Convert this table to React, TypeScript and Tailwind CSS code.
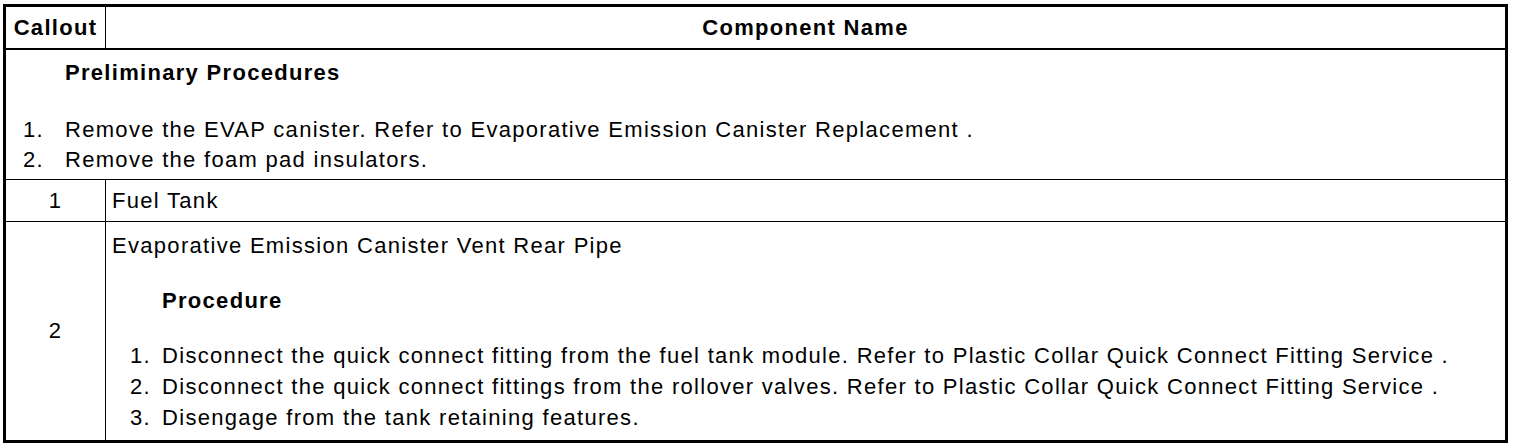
export default function App() {
  const font = { fontFamily: '"Liberation Sans", Arial, sans-serif' }
  return (
    <div className="bg-white w-[1520px] h-[446px] pt-[4px] pl-[3px]" style={font}>
      <table className="w-[1505px] border-collapse border-[3px] border-black text-[22px] tracking-[1.3px] text-black">
        <thead>
          <tr className="h-[43px] border-b-[2px] border-black">
            <th className="w-[101px] border-r border-black font-bold text-center">Callout</th>
            <th className="font-bold text-center">Component Name</th>
          </tr>
        </thead>
        <tbody>
          <tr className="border-b border-black">
            <td colSpan={2} className="pt-[8px] pb-[4px] align-top">
              <div className="pl-[59px] font-bold leading-[30px]">Preliminary Procedures</div>
              <ol className="mt-[27px] leading-[30px]">
                <li className="flex"><span className="w-[59px] pl-[17px]">1.</span>Remove the EVAP canister. Refer to Evaporative Emission Canister Replacement .</li>
                <li className="flex"><span className="w-[59px] pl-[17px]">2.</span>Remove the foam pad insulators.</li>
              </ol>
            </td>
          </tr>
          <tr className="h-[42px] border-b border-black">
            <td className="border-r border-black text-center">1</td>
            <td className="pl-[6px]">Fuel Tank</td>
          </tr>
          <tr>
            <td className="border-r border-black text-center">2</td>
            <td className="pl-[6px] pt-[9px] pb-[7px] align-top">
              <div className="leading-[30px]">Evaporative Emission Canister Vent Rear Pipe</div>
              <div className="mt-[25px] pl-[50px] font-bold leading-[30px]">Procedure</div>
              <ol className="mt-[24px] leading-[31px]">
                <li className="flex"><span className="w-[50px] pl-[18px]">1.</span>Disconnect the quick connect fitting from the fuel tank module. Refer to Plastic Collar Quick Connect Fitting Service .</li>
                <li className="flex"><span className="w-[50px] pl-[18px]">2.</span>Disconnect the quick connect fittings from the rollover valves. Refer to Plastic Collar Quick Connect Fitting Service .</li>
                <li className="flex"><span className="w-[50px] pl-[18px]">3.</span>Disengage from the tank retaining features.</li>
              </ol>
            </td>
          </tr>
        </tbody>
      </table>
    </div>
  )
}
